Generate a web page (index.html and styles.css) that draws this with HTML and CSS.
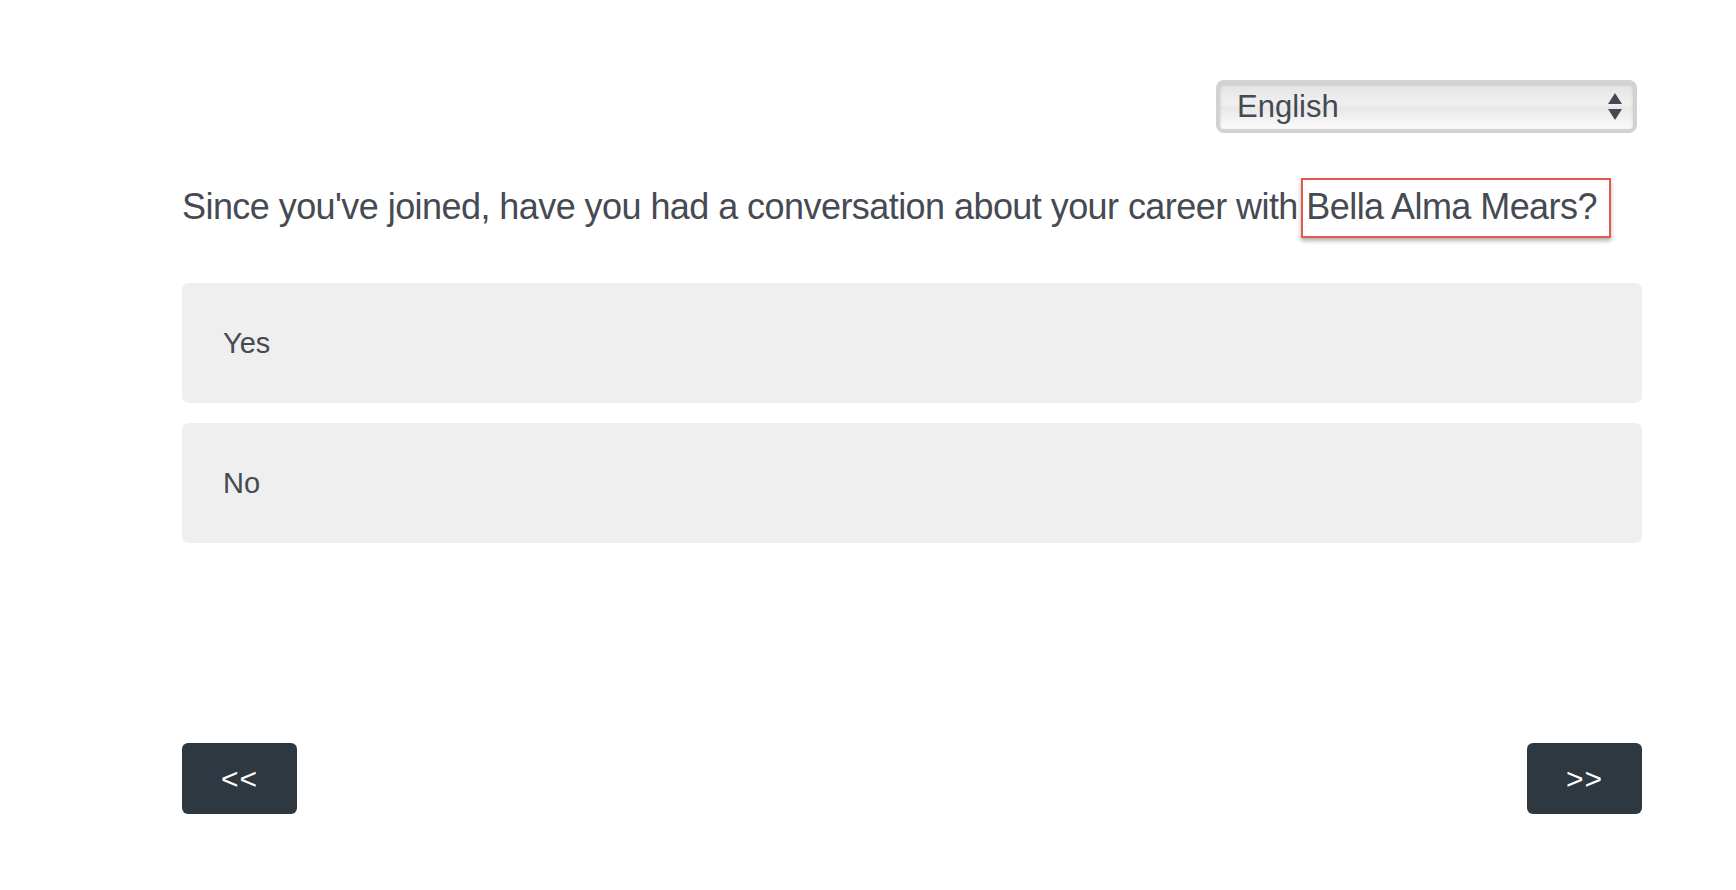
FILE: index.html
```html
<!DOCTYPE html>
<html>
<head>
<meta charset="utf-8">
<link rel="stylesheet" href="styles.css">
</head>
<body>
<main class="page">
  <div class="lang-row">
    <div class="lang-select">
      <span class="lang-label">English</span>
      <svg class="lang-arrows" width="16" height="30" viewBox="0 0 16 30"><path d="M8 1 L15 12 L1 12 Z" fill="#454a52"/><path d="M1 17 L15 17 L8 28 Z" fill="#454a52"/></svg>
    </div>
  </div>
  <h1 class="question">Since you've joined, have you had a conversation about your career with <span class="highlight">Bella Alma Mears?</span></h1>
  <div class="options">
    <div class="option">Yes</div>
    <div class="option">No</div>
  </div>
  <div class="nav">
    <button class="nav-btn">&lt;&lt;</button>
    <button class="nav-btn">&gt;&gt;</button>
  </div>
</main>
</body>
</html>
```
FILE: styles.css
```css
html, body {
  margin: 0;
  padding: 0;
  background: #ffffff;
}
body {
  font-family: "Liberation Sans", Arial, sans-serif;
  color: #464a52;
}
.page {
  width: 1460px;
  margin-left: 182px;
  padding-top: 80px;
}
.lang-row {
  display: flex;
  justify-content: flex-end;
  padding-right: 5px;
}
.lang-select {
  box-sizing: border-box;
  width: 421px;
  height: 53px;
  border: 4px solid #d2d2d4;
  border-radius: 8px;
  background: linear-gradient(#e4e4e4, #f0f0f0 45%, #e8e8e8 52%, #fbfbfb);
  box-shadow: inset 0 1px 3px rgba(0,0,0,0.15);
  display: flex;
  align-items: center;
  justify-content: space-between;
  padding: 0 10px 0 17px;
}
.lang-label {
  font-size: 31px;
  color: #454a52;
}
.question {
  margin: 50px 0 0 0;
  font-size: 36px;
  font-weight: normal;
  line-height: 48px;
  color: #464a52;
  letter-spacing: -0.56px;
}
.highlight {
  margin-left: -6px;
  border: 2px solid #e05a4f;
  padding: 6px 12px 9px 3px;
  box-shadow: 0 3px 4px rgba(0,0,0,0.3);
}
.options {
  margin-top: 52px;
  display: flex;
  flex-direction: column;
  gap: 20px;
}
.option {
  height: 120px;
  box-sizing: border-box;
  background: #efefef;
  border-radius: 7px;
  display: flex;
  align-items: center;
  padding-left: 41px;
  font-size: 29px;
  color: #464a52;
}
.nav {
  margin-top: 200px;
  display: flex;
  justify-content: space-between;
}
.nav-btn {
  width: 115px;
  height: 71px;
  border: none;
  border-radius: 6px;
  background: #2d3840;
  color: #ffffff;
  font-family: "Liberation Sans", Arial, sans-serif;
  font-size: 30px;
  letter-spacing: 1px;
  padding: 0;
}
```
